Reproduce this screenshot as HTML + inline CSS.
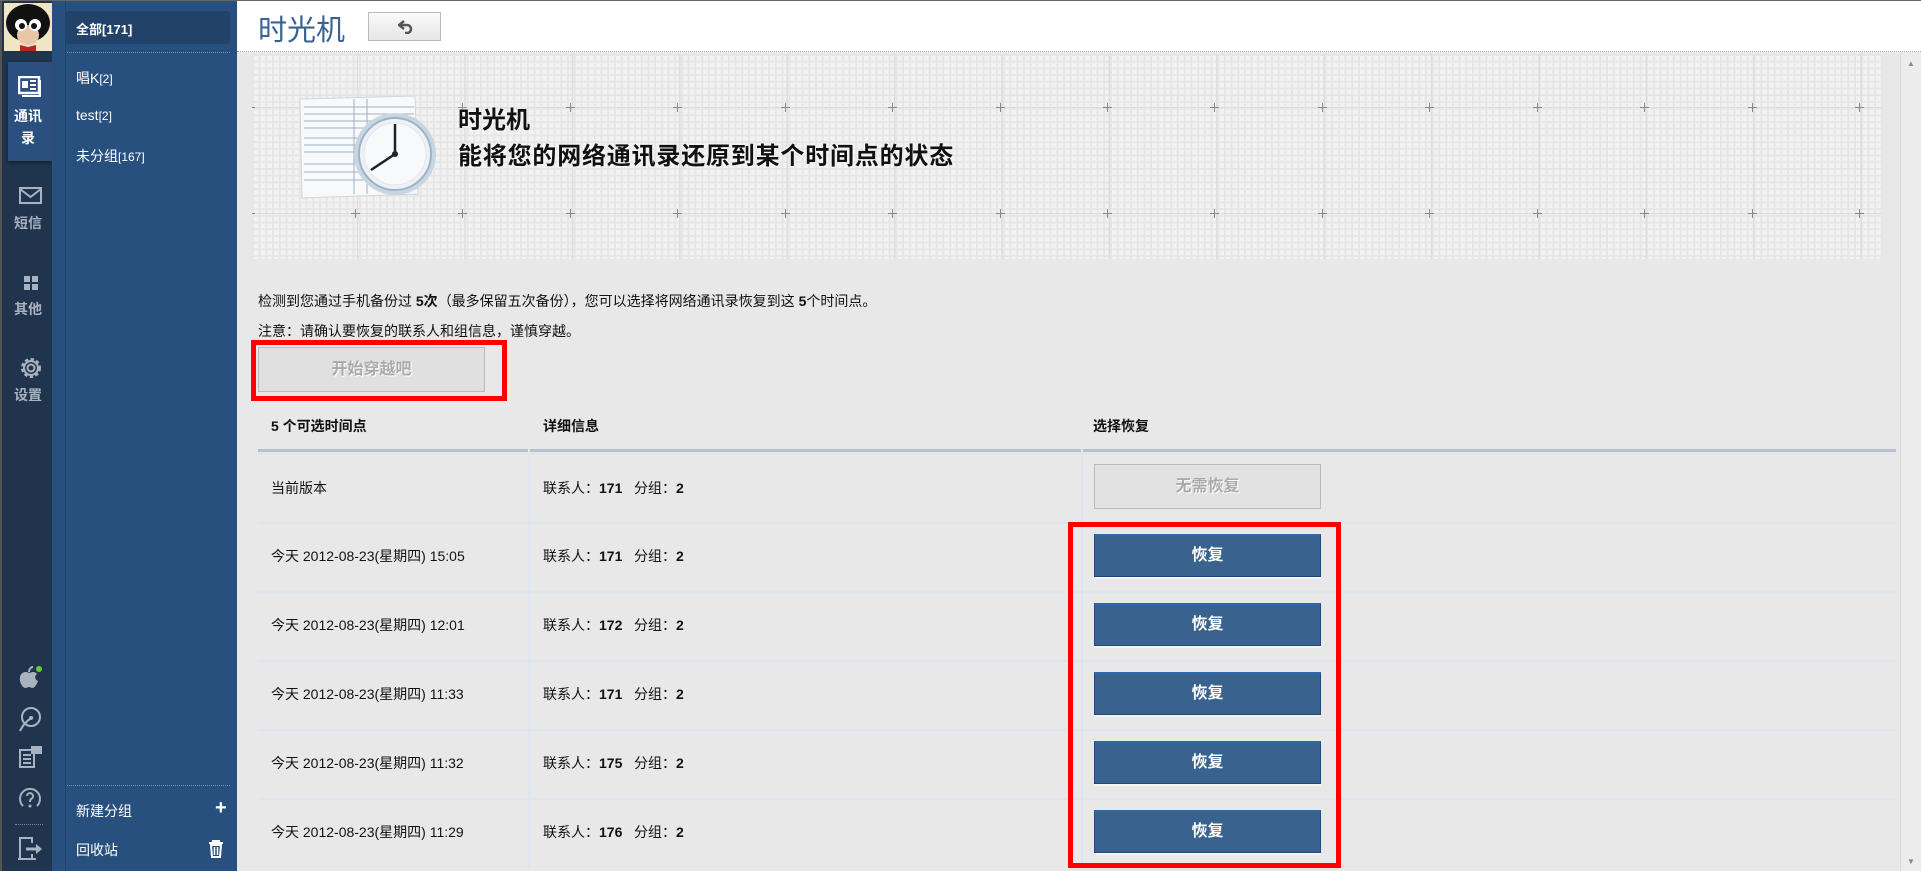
<!DOCTYPE html>
<html><head><meta charset="utf-8">
<style>
*{margin:0;padding:0;box-sizing:border-box}
body{width:1921px;height:870px;overflow:hidden;background:#e8e8e8;font-family:"Liberation Sans","Noto Sans CJK SC",sans-serif;position:relative;border-top:1px solid #666}
.abs{position:absolute}
#bar{left:0;top:0;width:52px;height:870px;background:#20344e;border-left:2px solid #555}
#nav{left:52px;top:0;width:185px;height:870px;background:#27507f;border-left:7px solid #27507f}
#nav .ln{position:absolute;left:6px;top:0;width:1px;height:870px;background:#1f4470}
.ic{color:#a9b3bf;font-size:14px;font-weight:bold;text-align:center;width:52px;left:0}
.navitem{color:#fff;font-size:14px;left:76px}
.sm{font-size:12px}
.dots{border-top:1px dotted #6f8fb5;height:0}
#hdr{left:237px;top:0;width:1684px;height:51px;background:#fff;border-bottom:1px dotted #aaa}
#banner{left:252px;top:53px;width:1630px;height:205px;background-color:#f2f2f2;
background-image:linear-gradient(90deg,rgba(0,0,0,0) 106px,#ddd 106px,#ddd 107.4px,rgba(0,0,0,0) 107.4px),linear-gradient(90deg,#e6e6e6 2px,transparent 2px),linear-gradient(#e6e6e6 2px,transparent 2px);
background-size:107.4px 100%,6.71px 6.71px,6.71px 6.71px;background-position:-1px 0,0 0,0 0}
.hl{position:absolute;left:0;width:100%;height:1px;background:#ddd}
.t12{font-size:14px;color:#111}
.btn{position:absolute;left:1094px;width:227px;height:43px;background:#39628e;border:1px solid #1f4a7c;border-top:2px solid #2f68a8;color:#fff;font-size:16px;font-weight:bold;text-align:center;line-height:40px;box-shadow:0 2px 0 #f4f4f4}
.row{position:absolute;left:258px;width:1638px;height:69px;border-top:2px solid #dde6ef}
.c1{position:absolute;left:13px;font-size:14px;color:#111}
.c2{position:absolute;left:285px;font-size:14px;color:#111}
.vl{position:absolute;top:0;width:2px;height:67px;background:#dde6ef}
.red{position:absolute;border:5px solid #f00}
.hd{position:absolute;top:415px;font-size:14px;font-weight:bold;color:#111}
</style></head><body>
<div id="bar" class="abs">
 <div class="abs" style="left:2px;top:2px;width:48px;height:48px;background:#f0e6c4;overflow:hidden">
  <svg width="48" height="48"><ellipse cx="24" cy="20" rx="22" ry="19" fill="#111"/><ellipse cx="24" cy="32" rx="11" ry="10" fill="#e8c7a8"/><circle cx="17" cy="22" r="6" fill="#fff"/><circle cx="31" cy="22" r="6" fill="#fff"/><circle cx="18" cy="23" r="3" fill="#111"/><circle cx="30" cy="23" r="3" fill="#111"/><path d="M16 42 L24 44 L32 42 L32 48 L16 48Z" fill="#b22"/></svg>
 </div>
 <div class="abs" style="left:6px;top:61px;width:44px;height:99px;background:#2b5080;box-shadow:0 2px 3px rgba(0,0,0,.4)"></div>
 <svg class="abs" style="left:16px;top:75px" width="24" height="22"><rect x="1" y="1" width="20" height="16" fill="none" stroke="#fff" stroke-width="2.5"/><rect x="4" y="5" width="6" height="7" fill="#fff"/><path d="M12 5h6M12 9h6M12 13h6" stroke="#fff" stroke-width="2"/><path d="M22 4v16H4" fill="none" stroke="#fff" stroke-width="2"/></svg>
 <div class="abs ic" style="top:104px;color:#fff;line-height:22px">通讯<br>录</div>
 <svg class="abs" style="left:17px;top:186px" width="24" height="18"><rect x="1" y="1" width="21" height="15" fill="none" stroke="#a9b3bf" stroke-width="2"/><path d="M1 2 L11.5 10 L22 2" fill="none" stroke="#a9b3bf" stroke-width="2"/></svg>
 <div class="abs ic" style="top:212px">短信</div>
 <svg class="abs" style="left:21px;top:274px" width="16" height="16"><rect x="1" y="1" width="6" height="6" fill="#a9b3bf"/><rect x="9" y="1" width="6" height="6" fill="#a9b3bf"/><rect x="1" y="9" width="6" height="6" fill="#a9b3bf"/><rect x="9" y="9" width="6" height="6" fill="#a9b3bf"/></svg>
 <div class="abs ic" style="top:298px">其他</div>
 <svg class="abs" style="left:17px;top:355px" width="24" height="24"><circle cx="12" cy="12" r="8" fill="none" stroke="#a9b3bf" stroke-width="4" stroke-dasharray="3 2.3"/><circle cx="12" cy="12" r="7" fill="none" stroke="#a9b3bf" stroke-width="2"/><circle cx="12" cy="12" r="3.5" fill="none" stroke="#a9b3bf" stroke-width="2"/></svg>
 <div class="abs ic" style="top:384px">设置</div>
 <svg class="abs" style="left:14px;top:663px" width="28" height="28"><path d="M13 9c-3-2-8-1-9 4-1 5 2 10 5 11 2 0 3-1 4-1s2 1 4 1c2-1 4-4 5-7-3-1-4-5-1-7-2-3-5-2-8-1z" fill="#a9b3bf"/><path d="M13 8c0-3 2-5 4-5" stroke="#a9b3bf" stroke-width="2" fill="none"/><circle cx="23" cy="5" r="3" fill="#6c3"/></svg>
 <svg class="abs" style="left:14px;top:704px" width="28" height="28"><circle cx="15" cy="12" r="9" fill="none" stroke="#a9b3bf" stroke-width="2"/><path d="M4 26 C8 18 12 15 17 12" stroke="#a9b3bf" stroke-width="2" fill="none"/><circle cx="15" cy="13" r="2" fill="#a9b3bf"/></svg>
 <svg class="abs" style="left:16px;top:745px" width="26" height="24"><rect x="2" y="4" width="14" height="17" fill="none" stroke="#a9b3bf" stroke-width="2"/><path d="M5 9h8M5 13h8M5 17h8" stroke="#a9b3bf" stroke-width="2"/><rect x="13" y="0" width="11" height="8" fill="#a9b3bf"/></svg>
 <svg class="abs" style="left:16px;top:786px" width="24" height="24"><path d="M5 19 A10 10 0 1 1 19 19" fill="none" stroke="#a9b3bf" stroke-width="2"/><path d="M9 9a3 3 0 1 1 4 3c-1 1-1 2-1 3" fill="none" stroke="#a9b3bf" stroke-width="2"/><circle cx="12" cy="19" r="1.5" fill="#a9b3bf"/></svg>
 <div class="abs dots" style="left:13px;top:823px;width:28px;border-color:#7a8899"></div>
 <svg class="abs" style="left:15px;top:835px" width="28" height="24"><path d="M3 23V2h12v5M3 23h12v-5M1 23h18" fill="none" stroke="#a9b3bf" stroke-width="2"/><path d="M9 13h12" stroke="#a9b3bf" stroke-width="3"/><path d="M19 8l6 5-6 5z" fill="#a9b3bf"/></svg>
</div>
<div id="nav" class="abs">
 <div class="ln"></div>
 <div class="abs" style="left:7px;top:10px;width:164px;height:33px;background:#22426a;border-radius:3px"></div>
 <div class="abs" style="left:17px;top:18px;color:#fff;font-size:13px;font-weight:bold">全部[171]</div>
 <div class="abs dots" style="left:8px;top:51px;width:163px"></div>
 <div class="abs navitem" style="left:17px;top:67px">唱K<span class="sm">[2]</span></div>
 <div class="abs navitem" style="left:17px;top:106px">test<span class="sm">[2]</span></div>
 <div class="abs navitem" style="left:17px;top:145px">未分组<span class="sm">[167]</span></div>
 <div class="abs dots" style="left:8px;top:784px;width:163px"></div>
 <div class="abs navitem" style="left:17px;top:800px">新建分组</div>
 <div class="abs" style="left:156px;top:796px;color:#fff;font-size:20px;font-weight:bold">+</div>
 <div class="abs navitem" style="left:17px;top:839px">回收站</div>
 <svg class="abs" style="left:149px;top:839px" width="16" height="18"><path d="M1 3h14M5 3V1h6v2" stroke="#fff" stroke-width="2" fill="none"/><path d="M3 5h10l-1 12H4z" fill="none" stroke="#fff" stroke-width="2"/><path d="M6.5 7v8M9.5 7v8" stroke="#fff" stroke-width="1.5"/></svg>
</div>
<div id="hdr" class="abs">
 <div class="abs" style="left:21px;top:6px;font-size:29px;color:#3a6391">时光机</div>
 <div class="abs" style="left:131px;top:11px;width:73px;height:29px;border:1px solid #bbb;background:linear-gradient(#fafafa,#e6e6e6)">
  <svg class="abs" style="left:29px;top:7px" width="16" height="14"><path d="M6 1 L1 5 L6 9" fill="none" stroke="#555" stroke-width="2.5"/><path d="M2 5 H9 a4 4 0 0 1 0 8 H7" fill="none" stroke="#555" stroke-width="2.5"/></svg>
 </div>
</div>
<div id="banner" class="abs">
 <div class="hl" style="top:53px"></div><div class="hl" style="top:159px"></div>
 <svg class="abs" style="left:0;top:0" width="1630" height="205">
  <g stroke="#888" stroke-width="1">
  <path d="M0 53.5h3M0 159.5h3"/>
   <path d="M103.5 49v9M99 53.5h9M103.5 155v9M99 159.5h9"/>
   <path d="M210.5 49v9M206 53.5h9M210.5 155v9M206 159.5h9"/>
   <path d="M318.5 49v9M314 53.5h9M318.5 155v9M314 159.5h9"/>
   <path d="M425.5 49v9M421 53.5h9M425.5 155v9M421 159.5h9"/>
   <path d="M533.5 49v9M529 53.5h9M533.5 155v9M529 159.5h9"/>
   <path d="M640.5 49v9M636 53.5h9M640.5 155v9M636 159.5h9"/>
   <path d="M748.5 49v9M744 53.5h9M748.5 155v9M744 159.5h9"/>
   <path d="M855.5 49v9M851 53.5h9M855.5 155v9M851 159.5h9"/>
   <path d="M962.5 49v9M958 53.5h9M962.5 155v9M958 159.5h9"/>
   <path d="M1070.5 49v9M1066 53.5h9M1070.5 155v9M1066 159.5h9"/>
   <path d="M1177.5 49v9M1173 53.5h9M1177.5 155v9M1173 159.5h9"/>
   <path d="M1285.5 49v9M1281 53.5h9M1285.5 155v9M1281 159.5h9"/>
   <path d="M1392.5 49v9M1388 53.5h9M1392.5 155v9M1388 159.5h9"/>
   <path d="M1500.5 49v9M1496 53.5h9M1500.5 155v9M1496 159.5h9"/>
   <path d="M1607.5 49v9M1603 53.5h9M1607.5 155v9M1603 159.5h9"/>
  </g>
  <path d="M48 45 L163 42 L166 140 L50 144Z" fill="#f8f9fb" stroke="#cfd6de"/>
  <g stroke="#9fb0c4" stroke-width="1"><path d="M52 53h110M52 60h110M52 67h110M52 74h110M52 84h110M52 91h110M52 98h110M52 110h110M52 118h110M52 126h110M102 45v95M115 45v95"/></g>
  <circle cx="143" cy="100" r="41" fill="#c8d6e2"/><circle cx="143" cy="100" r="36" fill="#eef2f6" stroke="#9fb3c6" stroke-width="2"/><circle cx="143" cy="100" r="31" fill="#f7f9fb" stroke="#dfe5ec"/>
  <path d="M143 100 V70 M143 100 L119 116" stroke="#222" stroke-width="2.5"/><circle cx="143" cy="100" r="3" fill="#222"/>
 </svg>
 <div class="abs" style="left:206px;top:46px;font-size:24px;font-weight:bold;color:#111;text-shadow:0 0 3px #fff">时光机</div>
 <div class="abs" style="left:206px;top:82px;font-size:24px;letter-spacing:0.8px;font-weight:bold;color:#111;text-shadow:0 0 3px #fff">能将您的网络通讯录还原到某个时间点的状态</div>
</div>
<div class="abs" style="left:1900px;top:52px;width:21px;height:818px;background:#ececec;border-left:1px solid #ddd"><div style="color:#888;font-size:8px;text-align:center;margin-top:6px">▲</div><div style="color:#888;font-size:8px;text-align:center;position:absolute;bottom:5px;width:100%">▼</div></div>
<div class="abs t12" style="left:258px;top:290px">检测到您通过手机备份过 <b>5次</b>（最多保留五次备份），您可以选择将网络通讯录恢复到这 <b>5</b>个时间点。</div>
<div class="abs t12" style="left:258px;top:320px">注意：请确认要恢复的联系人和组信息，谨慎穿越。</div>
<div class="abs" style="left:258px;top:346px;width:227px;height:45px;background:#e0e0e0;border:1px solid #bbb;color:#aaa;font-size:16px;font-weight:bold;text-align:center;line-height:43px;text-shadow:1px 1px 0 #fff">开始穿越吧</div>
<div class="red" style="left:251px;top:339px;width:256px;height:61px"></div>
<div class="hd" style="left:271px">5 个可选时间点</div>
<div class="hd" style="left:543px">详细信息</div>
<div class="hd" style="left:1093px">选择恢复</div>
<div class="abs" style="left:258px;top:448px;width:270px;height:3px;background:#b8c0ca"></div>
<div class="abs" style="left:530px;top:448px;width:551px;height:3px;background:#b8c0ca"></div>
<div class="abs" style="left:1083px;top:448px;width:813px;height:3px;background:#b8c0ca"></div>

<div class="row" style="top:452px"><div class="vl" style="left:270px"></div><div class="vl" style="left:823px"></div><div class="c1" style="top:23px">当前版本</div><div class="c2" style="top:23px">联系人：<b>171</b>&nbsp;&nbsp; 分组：<b>2</b></div></div>
<div class="row" style="top:521px"><div class="vl" style="left:270px"></div><div class="vl" style="left:823px"></div><div class="c1" style="top:22px">今天 2012-08-23(星期四) 15:05</div><div class="c2" style="top:22px">联系人：<b>171</b>&nbsp;&nbsp; 分组：<b>2</b></div></div>
<div class="row" style="top:590px"><div class="vl" style="left:270px"></div><div class="vl" style="left:823px"></div><div class="c1" style="top:22px">今天 2012-08-23(星期四) 12:01</div><div class="c2" style="top:22px">联系人：<b>172</b>&nbsp;&nbsp; 分组：<b>2</b></div></div>
<div class="row" style="top:659px"><div class="vl" style="left:270px"></div><div class="vl" style="left:823px"></div><div class="c1" style="top:22px">今天 2012-08-23(星期四) 11:33</div><div class="c2" style="top:22px">联系人：<b>171</b>&nbsp;&nbsp; 分组：<b>2</b></div></div>
<div class="row" style="top:728px"><div class="vl" style="left:270px"></div><div class="vl" style="left:823px"></div><div class="c1" style="top:22px">今天 2012-08-23(星期四) 11:32</div><div class="c2" style="top:22px">联系人：<b>175</b>&nbsp;&nbsp; 分组：<b>2</b></div></div>
<div class="row" style="top:797px"><div class="vl" style="left:270px"></div><div class="vl" style="left:823px"></div><div class="c1" style="top:22px">今天 2012-08-23(星期四) 11:29</div><div class="c2" style="top:22px">联系人：<b>176</b>&nbsp;&nbsp; 分组：<b>2</b></div></div>

<div class="abs" style="left:1094px;top:463px;width:227px;height:45px;background:#e2e2e2;border:1px solid #bbb;color:#aaa;font-size:16px;font-weight:bold;text-align:center;line-height:43px;text-shadow:1px 1px 0 #fff">无需恢复</div>
<div class="btn" style="top:533px">恢复</div>
<div class="btn" style="top:602px">恢复</div>
<div class="btn" style="top:671px">恢复</div>
<div class="btn" style="top:740px">恢复</div>
<div class="btn" style="top:809px">恢复</div>
<div class="red" style="left:1068px;top:521px;width:273px;height:346px"></div>
</body></html>
